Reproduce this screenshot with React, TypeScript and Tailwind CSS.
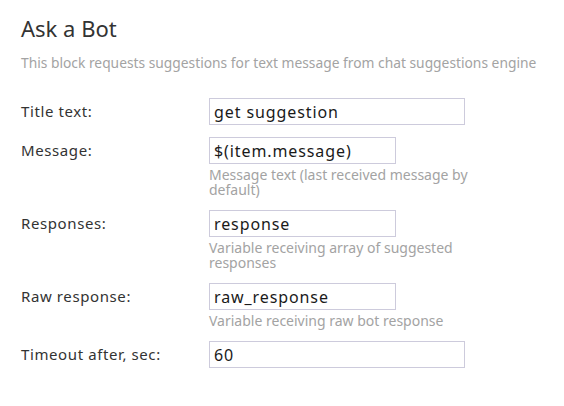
import React from 'react';

type Field = {
  label: string;
  value: string;
  wide?: boolean;
  hint?: string;
};

const FIELDS: Field[] = [
  { label: 'Title text:', value: 'get suggestion', wide: true },
  { label: 'Message:', value: '$(item.message)', hint: 'Message text (last received message by default)' },
  { label: 'Responses:', value: 'response', hint: 'Variable receiving array of suggested responses' },
  { label: 'Raw response:', value: 'raw_response', hint: 'Variable receiving raw bot response' },
  { label: 'Timeout after, sec:', value: '60', wide: true },
];

export default function App() {
  return (
    <div
      className="min-h-[406px] w-[564px] bg-white pl-[21px] pt-[13px] text-[#333]"
      style={{ fontFamily: '"Noto Sans", "Open Sans", sans-serif' }}
    >
      <h2 className="text-[22px] leading-[30px] font-normal text-[#333]">Ask a Bot</h2>
      <p className="mt-[11px] text-[13.8px] leading-[18px] text-[#a3a3a3]">
        This block requests suggestions for text message from chat suggestions engine
      </p>

      <div className="mt-[26px] flex flex-col">
        {FIELDS.map((f) => (
          <div key={f.label} className={`flex ${f.hint ? 'mb-[13px]' : 'mb-3'}`}>
            <label className="w-[188px] shrink-0 text-[15px] leading-[27px] tracking-[0.6px] text-[#333]">
              {f.label}
            </label>
            <div className="w-[272px]">
              <input
                readOnly
                value={f.value}
                className={`h-[27px] border border-[#cdcbdc] bg-white px-[4px] text-[16px] tracking-[0.9px] text-[#1a1a1a] outline-none ${f.wide ? 'w-[256px]' : 'w-[187px]'}`}
                style={{ fontFamily: '"Noto Sans", "Open Sans", sans-serif' }}
              />
              {f.hint && (
                <div className="mt-[3px] text-[14px] leading-[15px] text-[#a3a3a3]">{f.hint}</div>
              )}
            </div>
          </div>
        ))}
      </div>
    </div>
  );
}
